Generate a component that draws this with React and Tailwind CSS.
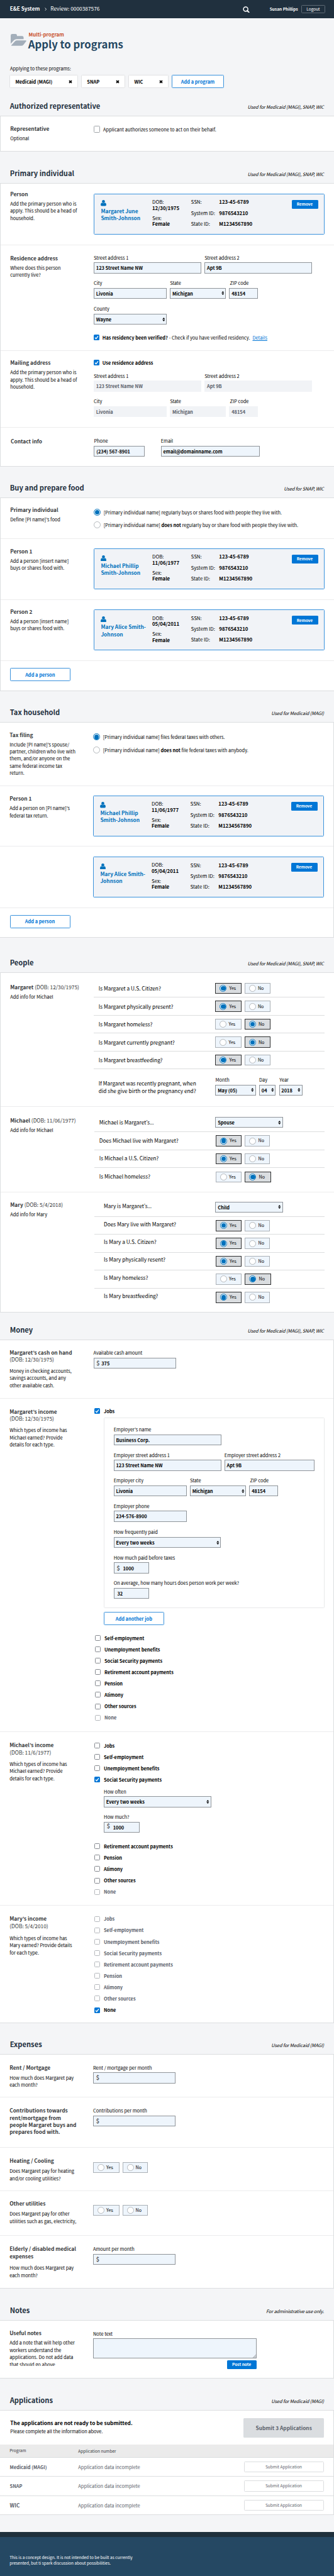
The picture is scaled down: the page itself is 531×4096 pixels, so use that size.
import React from 'react';

const FONT = "font-['Noto_Sans_CJK_JP','Noto_Sans',sans-serif]";

/* ---------- icons ---------- */

function Times() {
  return (
    <svg className="h-[6px] w-[6px]" viewBox="0 0 12 12">
      <path d="M2 2.2 L10 9.8 M10 2.2 L2 9.8" stroke="#000" strokeWidth="3.6" fill="none" />
    </svg>
  );
}

function Folder() {
  return (
    <svg className="h-[19px] w-[25px] shrink-0" viewBox="0 0 145 110" fill="#a3aeba">
      <path d="M0 90 V14 Q0 0 14 0 H44 Q58 0 58 14 V19 H104 Q119 19 119 34 V48 H54 Q40 48 30 58 Z" />
      <path d="M6 104 L40 67 Q48 59 58 59 H140 Q147 59 143 66 L119 98 Q110 109 97 109 H9 Q3 109 6 104 Z" />
    </svg>
  );
}

function Person() {
  return (
    <svg className="h-[9.5px] w-[9px]" viewBox="0 0 18 19" fill="#0071bc">
      <ellipse cx="9" cy="4.9" rx="4.7" ry="4.9" />
      <path d="M4.3 8.6 Q9 12.6 13.7 8.6 Q18 9.4 18 15.5 Q18 19 14.5 19 H3.5 Q0 19 0 15.5 Q0 9.4 4.3 8.6 Z" />
    </svg>
  );
}

function Search() {
  return (
    <svg className="h-[10.5px] w-[11px]" viewBox="0 0 22 21" fill="none" stroke="#fff">
      <circle cx="9.2" cy="8.8" r="7" strokeWidth="3" />
      <path d="M14.2 14 L19.6 19.2" strokeWidth="3.8" strokeLinecap="round" />
    </svg>
  );
}

function Sort() {
  return (
    <svg className="h-[6px] w-[4.6px] shrink-0" viewBox="0 0 9 12" fill="#000">
      <path d="M0.3 5 L4.5 0 L8.7 5 Z M0.3 7 L4.5 12 L8.7 7 Z" />
    </svg>
  );
}

/* ---------- controls ---------- */

function Check({ on, muted }) {
  if (on) {
    return (
      <span className="flex h-[9px] w-[9px] shrink-0 items-center justify-center rounded-[1.5px] bg-[#0076d6]">
        <svg className="h-[7px] w-[7px]" viewBox="0 0 14 14" fill="none" stroke="#fff" strokeWidth="2.6">
          <path d="M2 7.6 L5.4 11.4 L12 2.6" />
        </svg>
      </span>
    );
  }
  return (
    <span
      className={`h-[9px] w-[9px] shrink-0 rounded-[1.5px] border bg-white ${muted ? 'border-[#b5b8bc]' : 'border-[#85898f]'}`}
    />
  );
}

function CheckRow({ on, muted, children }) {
  return (
    <div className="flex h-[18.13px] items-center gap-[6px]">
      <Check on={on} muted={muted} />
      <span className={`font-bold ${muted ? 'text-[#5b616b]' : 'text-black'}`}>{children}</span>
    </div>
  );
}

function Radio({ on }) {
  if (on) {
    return (
      <span className="flex h-[11px] w-[11px] shrink-0 items-center justify-center rounded-full border border-[#0071bc] bg-white">
        <span className="h-[7.4px] w-[7.4px] rounded-full bg-[#0071bc]" />
      </span>
    );
  }
  return <span className="h-[11px] w-[11px] shrink-0 rounded-full border border-[#b4b8bc] bg-white" />;
}

function YesNo({ value, narrow }) {
  const on = 'border-[#2e2f30] bg-[#dadde0] gap-[4px]';
  const off = 'border-[#aab0b6] bg-[#eef5fc] gap-[3px]';
  return (
    <div className="flex gap-[5px] text-[7.2px]">
      <span className={`flex h-[17.5px] w-[41.5px] items-center border pl-[6px] ${value === 'yes' ? on : off}`}>
        <Radio on={value === 'yes'} />
        <span>Yes</span>
      </span>
      <span
        className={`flex h-[17.5px] items-center border pl-[6px] ${narrow ? 'w-[40px]' : 'w-[41.5px]'} ${value === 'no' ? on : off}`}
      >
        <Radio on={value === 'no'} />
        <span>No</span>
      </span>
    </div>
  );
}

function Input({ w, value, select, disabled, dollar, inset = 'pl-[2.8px]' }) {
  return (
    <div
      className={`flex h-[17.5px] items-center justify-between font-bold ${w} ${
        disabled ? 'bg-[#f1f3f6] pl-[3.8px] text-[#5b616b]' : `border border-[#8f9499] bg-[#eef5fc] text-black ${inset}`
      } ${select ? 'pr-[1.8px]' : ''}`}
    >
      <span className="flex items-center">
        {dollar && <span className={`pl-[1px] text-[9px] font-bold leading-[11px] text-[#5b5e62] ${dollar}`}>$</span>}
        <span>{value}</span>
      </span>
      {select && <Sort />}
    </div>
  );
}

function Field({ label, shift = '', ...rest }) {
  return (
    <div className="flex flex-col gap-[2.1px]">
      <span className={shift}>{label}</span>
      <Input {...rest} />
    </div>
  );
}

function OutlineButton({ w, children }) {
  return (
    <button
      className={`flex h-[21px] items-center justify-center rounded-[1.5px] border border-[#3a92dc] bg-white font-bold text-[#0076d6] ${w}`}
    >
      {children}
    </button>
  );
}

/* ---------- page structure ---------- */

function Head({ h, title, note }) {
  return (
    <div className={`flex items-end justify-between border-b border-[#dcdee0] bg-[#f4f5f7] pb-[7.5px] pl-[15.7px] pr-[16px] ${h}`}>
      <h2 className="mb-[1px] text-[11.16px] font-bold leading-[14px] text-[#1f303e]">{title}</h2>
      <span className="leading-[12px] tracking-[-0.1px] italic">{note}</span>
    </div>
  );
}

function Row({ h, left, right, title, dob, lines = [], gap = 'mt-[3.4px]', last, children }) {
  return (
    <div className={`flex border-b ${last ? 'border-[#dcdee0]' : 'border-[#ececed]'} ${h}`}>
      <div className={`w-[148px] shrink-0 pl-[15.2px] ${left}`}>
        {title && <h3 className="text-[8.33px] font-bold text-[#36383a]">{title}</h3>}
        {dob && <div className="text-[8.33px] text-[#36383a]">{dob}</div>}
        <div className={gap}>
          {lines.map((l) => (
            <div key={l}>{l}</div>
          ))}
        </div>
      </div>
      <div className={right}>{children}</div>
    </div>
  );
}

function PersonCard({ first, second, dob }) {
  return (
    <div className="flex h-[64.8px] w-[367px] justify-between rounded-[1.5px] border border-[#3a92dc] bg-[#f1f3f7] pr-[9.5px] text-[7.83px]">
      <div className="flex">
        <div className="w-[92px] pl-[10.4px] pt-[9.3px]">
          <Person />
          <div className="mt-[1.8px] text-[8.33px] font-bold text-[#0071bc]">
            <div>{first}</div>
            <div>{second}</div>
          </div>
        </div>
        <div className="w-[61.6px] pt-[7.1px] leading-[9.5px]">
          <div>DOB:</div>
          <div className="font-bold">{dob}</div>
          <div className="mt-[6.5px]">Sex:</div>
          <div className="font-bold">Female</div>
        </div>
        <div className="w-[44.7px] pt-[3.2px] leading-[17.25px]">
          <div>SSN:</div>
          <div>System ID:</div>
          <div>State ID:</div>
        </div>
        <div className="pt-[3.2px] font-bold leading-[17.25px]">
          <div>123-45-6789</div>
          <div>9876543210</div>
          <div>M1234567890</div>
        </div>
      </div>
      <button className="mt-[9px] flex h-[13.5px] w-[42px] items-center justify-center rounded-[1.5px] bg-[#0076d6] text-[6.4px] font-bold text-white">
        Remove
      </button>
    </div>
  );
}

function Question({ text, pad, nudge = '', h = 'h-[28.4px]', last, children }) {
  return (
    <div className={`flex w-[366.5px] items-center ${h} ${last ? '' : 'border-b border-[#dcddde]'}`}>
      <div className={`w-[193.4px] shrink-0 text-[8.33px] ${pad} ${nudge}`}>{text}</div>
      {children}
    </div>
  );
}

function RadioLine({ on, children }) {
  return (
    <div className="flex h-[20.4px] items-center gap-[4.8px]">
      <Radio on={on} />
      <span>{children}</span>
    </div>
  );
}

function AppRow({ h, name, big }) {
  return (
    <div className={`flex items-center border-b border-[#dcdee0] pl-[15.6px] pr-[15.5px] text-[#5b616b] ${h}`}>
      <span className={`w-[108.7px] font-bold ${big ? 'text-[8.33px]' : 'text-[7.42px]'}`}>{name}</span>
      <span className="flex-1 text-[7.5px]">Application data incomplete</span>
      <button className="flex h-[17.5px] w-[127px] items-center justify-center rounded-[1.5px] border border-[#dcdee0] bg-white text-[6.5px]">
        Submit Application
      </button>
    </div>
  );
}

const INCOME = [
  'Jobs',
  'Self-employment',
  'Unemployment benefits',
  'Social Security payments',
  'Retirement account payments',
  'Pension',
  'Alimony',
  'Other sources',
];

const ALL = 'Used for Medicaid (MAGI), SNAP, WIC';
const HOUSEHOLD = ['Add the primary person who is', 'apply. This should be a head of', 'household.'];

export default function App() {
  return (
    <div className={`h-[4096px] w-[531px] overflow-hidden whitespace-nowrap bg-[#f4f5f7] text-[7.42px] leading-[11.43px] text-black ${FONT}`}>
      <header className="flex h-[28.6px] items-center bg-[#20303e] pb-[1px] pl-[15.7px] pr-[14.2px] text-[8.2px] text-white">
        <span className="font-bold">E&amp;E System</span>
        <svg className="ml-[7.5px] mt-[1.4px] h-[5.4px] w-[3.4px]" viewBox="0 0 7 11" fill="none" stroke="#fff" strokeWidth="1.8">
          <path d="M1 1 L5.6 5.5 L1 10" />
        </svg>
        <span className="ml-[6px] flex-1 text-[8.33px]">Review: 0000387576</span>
        <span className="mr-[31.4px] mt-[2px]">
          <Search />
        </span>
        <span className="mr-[5.4px] mt-[1px] text-[6.5px] font-bold">Susan Phillips</span>
        <button className="mt-[1.5px] flex h-[13.4px] w-[37.8px] items-center justify-center rounded-[1.5px] border border-[#5f6b76] text-[6.5px]">
          Logout
        </button>
      </header>

      <div className="h-[112.4px]">
        <div className="flex pl-[16.6px] pt-[20px]">
          <div className="pt-[5.7px]">
            <Folder />
          </div>
          <div className="pl-[4px]">
            <div className="text-[7.86px] font-bold text-[#c8502c]">Multi-program</div>
            <h1 className="-ml-[0.8px] text-[16.7px] font-bold leading-[20px] text-[#254863]">Apply to programs</h1>
          </div>
        </div>
        <div className="pl-[16px] pt-[23.2px]">Applying to these programs:</div>
        <div className="flex gap-[5.3px] pl-[15.2px] pt-[4.8px] font-bold">
          <span className="flex h-[21px] w-[108.5px] items-center justify-between rounded-[1.5px] border border-[#e1e2e4] bg-white pl-[8.3px] pr-[8px]">
            Medicaid (MAGI) <Times />
          </span>
          <span className="flex h-[21px] w-[69.8px] items-center justify-between rounded-[1.5px] border border-[#e1e2e4] bg-white pl-[8.3px] pr-[8px]">
            SNAP <Times />
          </span>
          <span className="flex h-[21px] w-[63.8px] items-center justify-between rounded-[1.5px] border border-[#e1e2e4] bg-white pl-[8.3px] pr-[8px]">
            WIC <Times />
          </span>
          <OutlineButton w="w-[82.6px]">Add a program</OutlineButton>
        </div>
      </div>

      <Head h="h-[44px]" title="Authorized representative" note={ALL} />
      <section className="border-l border-[#dcdee0] bg-white">
        <Row h="h-[56px]" left="pt-[14px]" right="pt-[14.7px]" title="Representative" lines={['Optional']} last>
          <div className="flex items-center gap-[4.7px]">
            <span className="h-[10.4px] w-[10.4px] rounded-[1.5px] border border-[#a0a4a8] bg-white" />
            <span>Applicant authorizes someone to act on their behalf.</span>
          </div>
        </Row>
      </section>

      <Head h="h-[51px]" title="Primary individual" note={ALL} />
      <section className="border-l border-[#dcdee0] bg-white">
        <Row h="h-[98px]" left="pt-[11.1px]" right="pt-[16.2px]" title="Person" lines={HOUSEHOLD}>
          <PersonCard first="Margaret June" second="Smith-Johnson" dob="12/30/1975" />
        </Row>
        <Row
          h="h-[168px]"
          left="pt-[14.8px]"
          right="pt-[13.7px]"
          title="Residence address"
          lines={['Where does this person', 'currently live?']}
        >
          <div className="flex gap-[5px]">
            <Field label="Street address 1" w="w-[171.3px]" value="123 Street Name NW" />
            <Field label="Street address 2" w="w-[171px]" value="Apt 9B" />
          </div>
          <div className="mt-[9.5px] flex gap-[5.2px]">
            <Field label="City" w="w-[116px]" value="Livonia" />
            <Field label="State" w="w-[89px]" value="Michigan" select />
            <Field label="ZIP code" shift="pl-[1.2px]" w="w-[45.7px]" value="48154" />
          </div>
          <div className="mt-[10px] flex">
            <Field label="County" w="w-[116px]" value="Wayne" select />
          </div>
          <div className="mt-[11px] flex h-[18.13px] items-center">
            <Check on />
            <span className="ml-[4.8px] font-bold">Has residency been verified?</span>
            <span className="ml-[2px]">- Check if you have verified residency.</span>
            <a className="ml-[4px] text-[#0076d6] underline">Details</a>
          </div>
        </Row>
        <Row h="h-[122px]" left="pt-[12.9px]" right="pt-[9.9px]" title="Mailing address" lines={HOUSEHOLD} gap="mt-[3.8px]">
          <div className="flex h-[18.13px] items-center gap-[4.8px]">
            <Check on />
            <span className="font-bold">Use residence address</span>
          </div>
          <div className="mt-[5.9px] flex gap-[5px]">
            <Field label="Street address 1" w="w-[171.3px]" value="123 Street Name NW" disabled />
            <Field label="Street address 2" w="w-[171px]" value="Apt 9B" disabled />
          </div>
          <div className="mt-[9.5px] flex gap-[5.2px]">
            <Field label="City" w="w-[116px]" value="Livonia" disabled />
            <Field label="State" w="w-[89px]" value="Michigan" disabled />
            <Field label="ZIP code" shift="pl-[1.2px]" w="w-[45.7px]" value="48154" disabled />
          </div>
        </Row>
        <Row h="h-[62px]" left="pt-[16.4px] pl-[16px]" right="pt-[15.1px]" title="Contact info" last>
          <div className="flex gap-[26px] pl-[0.4px]">
            <Field label="Phone" w="w-[80.3px]" value="(234) 567-8901" />
            <Field label="Email" w="w-[157.4px]" value="email@domainname.com" />
          </div>
        </Row>
      </section>

      <Head h="h-[50px]" title="Buy and prepare food" note="Used for SNAP, WIC" />
      <section className="border-l border-[#dcdee0] bg-white">
        <Row h="h-[65px]" left="pt-[12.8px]" right="pt-[12.1px]" title="Primary individual" lines={['Define [PI name]’s food']}>
          <RadioLine on>[Primary individual name] regularly buys or shares food with people they live with.</RadioLine>
          <RadioLine>
            [Primary individual name] <b>does not</b> regularly buy or share food with people they live with.
          </RadioLine>
        </Row>
        <Row
          h="h-[97px]"
          left="pt-[14.2px]"
          right="pt-[15.3px]"
          title="Person 1"
          lines={['Add a person [insert name]', 'buys or shares food with.']}
        >
          <PersonCard first="Michael Phillip" second="Smith-Johnson" dob="11/06/1977" />
        </Row>
        <Row
          h="h-[97px]"
          left="pt-[13.2px]"
          right="pt-[15.5px]"
          title="Person 2"
          lines={['Add a person [insert name]', 'buys or shares food with.']}
        >
          <PersonCard first="Mary Alice Smith-" second="Johnson" dob="05/04/2011" />
        </Row>
        <div className="h-[48px] border-b border-[#dcdee0] pl-[14.8px] pt-[11px]">
          <OutlineButton w="w-[96px]">Add a person</OutlineButton>
        </div>
      </section>

      <Head h="h-[50px]" title="Tax household" note="Used for Medicaid (MAGI)" />
      <section className="border-r border-[#dcdee0] bg-white">
        <Row
          h="h-[101px]"
          left="pt-[13.7px]"
          right="pt-[12.8px]"
          title="Tax filing"
          lines={[
            'Include [PI name]’s spouse/',
            'partner, children who live with',
            'them, and/or anyone on the',
            'same federal income tax',
            'return.',
          ]}
        >
          <RadioLine on>[Primary individual name] files federal taxes with others.</RadioLine>
          <RadioLine>
            [Primary individual name] <b>does not</b> file federal taxes with anybody.
          </RadioLine>
        </Row>
        <Row
          h="h-[96px]"
          left="pt-[14.5px]"
          right="pt-[15.2px]"
          title="Person 1"
          lines={['Add a person on [PI name]’s', 'federal tax return.']}
        >
          <PersonCard first="Michael Phillip" second="Smith-Johnson" dob="11/06/1977" />
        </Row>
        <Row h="h-[98px]" left="" right="pt-[16.4px]">
          <PersonCard first="Mary Alice Smith-" second="Johnson" dob="05/04/2011" />
        </Row>
        <div className="h-[47px] border-b border-[#dcdee0] pl-[15.5px] pt-[10.6px]">
          <OutlineButton w="w-[96px]">Add a person</OutlineButton>
        </div>
      </section>

      <Head h="h-[56px]" title="People" note={ALL} />
      <section className="border-l border-[#dcdee0] bg-white">
        <Row
          h="h-[213px]"
          left="pt-[16.7px]"
          right="pt-[11px]"
          gap="mt-[4px]"
          title={<>Margaret <span className="font-normal">(DOB: 12/30/1975)</span></>}
          lines={['Add info for Michael']}
        >
          {[
            ['Is Margaret a U.S. Citizen?', 'yes'],
            ['Is Margaret physically present?', 'yes'],
            ['Is Margaret homeless?', 'no'],
            ['Is Margaret currently pregnant?', 'no'],
            ['Is Margaret breastfeeding?', 'yes'],
          ].map(([text, value]) => (
            <Question key={text} text={text} pad="pl-[7.8px]" h="h-[28.5px]">
              <YesNo value={value} />
            </Question>
          ))}
          <div className="flex pt-[10.7px]">
            <div className="w-[193.4px] pl-[7.8px] pt-[5px] text-[8.33px] leading-[12px]">
              <div>If Margaret was recently pregnant, when</div>
              <div>did she give birth or the pregnancy end?</div>
            </div>
            <div className="flex gap-[5.2px]">
              <Field label="Month" w="w-[64.4px]" value="May (05)" select />
              <Field label="Day" w="w-[26.4px]" value="04" select />
              <Field label="Year" shift="pl-[0.8px]" w="w-[37.3px]" value="2018" select />
            </div>
          </div>
        </Row>
        <Row
          h="h-[136px]"
          left="pt-[15.9px]"
          right="pt-[12px] pl-[0.6px]"
          gap="mt-[4px]"
          title={<>Michael <span className="font-normal">(DOB: 11/06/1977)</span></>}
          lines={['Add info for Michael']}
        >
          <Question text={<>Michael is Margaret’s<span className="font-['Noto_Sans']">…</span></>} pad="pl-[8.2px]" nudge="mb-[1.6px]">
            <div className="-ml-[0.6px] mb-[2px]">
              <Input w="w-[107.3px]" value="Spouse" select />
            </div>
          </Question>
          <Question text="Does Michael live with Margaret?" pad="pl-[8.2px]" nudge="mb-[1.6px]">
            <YesNo value="yes" narrow />
          </Question>
          <Question text="Is Michael a U.S. Citizen?" pad="pl-[8.2px]" nudge="mb-[1.6px]">
            <YesNo value="yes" narrow />
          </Question>
          <Question text="Is Michael homeless?" pad="pl-[8.2px]" nudge="mb-[1.6px]" last>
            <YesNo value="no" />
          </Question>
        </Row>
        <Row
          h="h-[191px]"
          left="pt-[14.3px]"
          right="pt-[10.7px] pl-[0.6px]"
          title={<>Mary <span className="font-normal">(DOB: 5/4/2018)</span></>}
          lines={['Add info for Mary']}
          last
        >
          <Question text={<>Mary is Margaret’s<span className="font-['Noto_Sans']">…</span></>} pad="pl-[15.4px]" nudge="mb-[5px]">
            <div className="-ml-[0.6px] mb-[2px]">
              <Input w="w-[107.3px]" value="Child" select />
            </div>
          </Question>
          {[
            ['Does Mary live with Margaret?', 'yes'],
            ['Is Mary a U.S. Citizen?', 'yes'],
            ['Is Mary physically resent?', 'yes'],
            ['Is Mary homeless?', 'no'],
            ['Is Mary breastfeeding?', 'yes'],
          ].map(([text, value], i) => (
            <Question key={text} text={text} pad="pl-[15.4px]" nudge="mb-[5px]" last={i === 4}>
              <YesNo value={value} narrow={value === 'yes'} />
            </Question>
          ))}
        </Row>
      </section>

      <Head h="h-[44px]" title="Money" note={ALL} />
      <section className="border-r border-[#dcdee0] bg-white">
        <Row
          h="h-[93px]"
          left="pt-[13.7px]"
          right="pt-[14px]"
          gap="mt-[6.4px]"
          title="Margaret’s cash on hand"
          dob="(DOB: 12/30/1975)"
          lines={['Money in checking accounts,', 'savings accounts, and any', 'other available cash.']}
        >
          <div className="flex pl-[0.5px]">
            <Field label="Available cash amount" w="w-[131.5px]" value="375" dollar="pr-[2.6px]" />
          </div>
        </Row>
        <Row
          h="h-[530px]"
          left="pt-[15px]"
          right="pt-[10.9px]"
          gap="mt-[6.4px]"
          title="Margaret’s income"
          dob="(DOB: 12/30/1975)"
          lines={['Which types of income has', 'Michael earned? Provide', 'details for each type.']}
        >
          <div className="pl-[2px]">
            <CheckRow on>Jobs</CheckRow>
          </div>
          <div className="ml-[16.8px] mt-[1px] flex h-[303.4px] w-[351px] flex-col rounded-[1.5px] border border-[#e8e9ea] pl-[14.9px] pt-[12.3px]">
            <div className="flex">
              <Field label="Employer’s name" w="w-[171px]" value="Business Corp." />
            </div>
            <div className="mt-[9.5px] flex gap-[5.1px]">
              <Field label="Employer street address 1" w="w-[171px]" value="123 Street Name NW" />
              <Field label="Employer street address 2" w="w-[143px]" value="Apt 9B" />
            </div>
            <div className="mt-[9.5px] flex gap-[5.1px]">
              <Field label="Employer city" w="w-[116.2px]" value="Livonia" />
              <Field label="State" w="w-[89.4px]" value="Michigan" select />
              <Field label="ZIP code" shift="pl-[1px]" w="w-[45.7px]" value="48154" />
            </div>
            <div className="mt-[9.5px] flex">
              <Field label="Employer phone" w="w-[116.2px]" value="234-576-8900" />
            </div>
            <div className="mt-[10.5px] flex">
              <Field label="How frequently paid" w="w-[170.7px]" value="Every two weeks" select />
            </div>
            <div className="mt-[9.5px] flex">
              <Field label="How much paid before taxes" w="w-[56.5px]" value="1000" dollar="pr-[4.6px]" />
            </div>
            <div className="mt-[9px] flex">
              <Field
                label="On average, how many hours does person work per week?"
                w="w-[56.5px]"
                inset="pl-[4.8px]"
                value="32"
              />
            </div>
          </div>
          <div className="ml-[16.8px] mt-[5.5px]">
            <OutlineButton w="w-[96px]">Add another job</OutlineButton>
          </div>
          <div className="pl-[3px] pt-[11.3px]">
            {INCOME.slice(1).map((t) => (
              <CheckRow key={t}>{t}</CheckRow>
            ))}
            <CheckRow muted>None</CheckRow>
          </div>
        </Row>
        <Row
          h="h-[276px]"
          left="pt-[15.5px]"
          right="pt-[12.4px] pl-[2px]"
          gap="mt-[6.4px]"
          title="Michael’s income"
          dob="(DOB: 11/6/1977)"
          lines={['Which types of income has', 'Michael earned? Provide', 'details for each type.']}
        >
          {INCOME.slice(0, 4).map((t, i) => (
            <CheckRow key={t} on={i === 3}>
              {t}
            </CheckRow>
          ))}
          <div className="flex pl-[15px] pt-[3.8px]">
            <Field label="How often" w="w-[170.7px]" value="Every two weeks" select />
          </div>
          <div className="mb-[12.4px] flex pl-[15px] pt-[9.5px]">
            <Field label="How much?" w="w-[56.5px]" value="1000" dollar="pr-[4.6px] -mt-[3px]" />
          </div>
          {INCOME.slice(4).map((t) => (
            <CheckRow key={t}>{t}</CheckRow>
          ))}
          <CheckRow muted>None</CheckRow>
        </Row>
        <Row
          h="h-[187px]"
          left="pt-[15.3px]"
          right="pt-[12px] pl-[2px]"
          gap="mt-[7.9px]"
          title="Mary’s income"
          dob="(DOB: 5/4/2010)"
          lines={['Which types of income has', 'Mary earned? Provide details', 'for each type.']}
          last
        >
          {INCOME.map((t) => (
            <CheckRow key={t} muted>
              {t}
            </CheckRow>
          ))}
          <CheckRow on>None</CheckRow>
        </Row>
      </section>

      <Head h="h-[50px]" title="Expenses" note="Used for Medicaid (MAGI)" />
      <section className="border-r border-[#dcdee0] bg-white">
        <Row
          h="h-[68px]"
          left="pt-[14.8px]"
          right="pt-[14.7px]"
          gap="mt-[4.8px]"
          title="Rent / Mortgage"
          lines={['How much does Margaret pay', 'each month?']}
        >
          <div className="flex">
            <Field label="Rent / mortgage per month" w="w-[131.3px]" dollar="pr-[4px]" />
          </div>
        </Row>
        <Row
          h="h-[80px]"
          left="pt-[15.2px]"
          right="pt-[15.3px]"
          title={
            <>
              Contributions towards
              <br />
              rent/mortgage from
              <br />
              people Margaret buys and
              <br />
              prepares food with.
            </>
          }
        >
          <div className="flex">
            <Field label="Contributions per month" w="w-[131.3px]" dollar="pr-[4px]" />
          </div>
        </Row>
        <Row
          h="h-[69px]"
          left="pt-[15.2px]"
          right="pt-[23px]"
          gap="mt-[4.8px]"
          title="Heating / Cooling"
          lines={['Does Margaret pay for heating', 'and/or cooling utilities?']}
        >
          <YesNo narrow />
        </Row>
        <Row
          h="h-[71px]"
          left="pt-[14.1px]"
          right="pt-[22px]"
          gap="mt-[4.8px]"
          title="Other utilities"
          lines={['Does Margaret pay for other', 'utilities such as gas, electricity,']}
        >
          <YesNo narrow />
        </Row>
        <Row
          h="h-[84px]"
          left="pt-[15.3px]"
          right="pt-[15.2px]"
          gap="mt-[7px]"
          title={
            <>
              Elderly / disabled medical
              <br />
              expenses
            </>
          }
          lines={['How much does Margaret pay', 'each month?']}
          last
        >
          <div className="flex">
            <Field label="Amount per month" w="w-[131.3px]" dollar="pr-[4px]" />
          </div>
        </Row>
      </section>

      <Head h="h-[51px]" title="Notes" note="For administrative use only." />
      <section className="border-r border-[#dcdee0] bg-white">
        <div className="flex h-[92px] border-b border-[#dcdee0]">
          <div className="w-[148px] shrink-0 pl-[15.2px] pt-[14.2px]">
            <h3 className="text-[8.33px] font-bold text-[#36383a]">Useful notes</h3>
            <div className="mt-[3.6px] h-[42.8px] overflow-hidden">
              <div>Add a note that will help other</div>
              <div>workers understand the</div>
              <div>applications. Do not add data</div>
              <div>that should go above.</div>
            </div>
          </div>
          <div className="w-[259.5px] pt-[15px]">
            <div>Note text</div>
            <div className="mt-[1.8px] flex h-[31.4px] items-end justify-end border border-[#8f9499] bg-[#eef5fc]">
              <svg className="h-[5px] w-[5px]" viewBox="0 0 10 10" stroke="#8a8d91" strokeWidth="1.4">
                <path d="M0 10 L10 0 M3.3 10 L10 3.3 M6.6 10 L10 6.6" />
              </svg>
            </div>
            <button className="ml-auto mt-[3.6px] flex h-[13.6px] w-[46.7px] items-center justify-center rounded-[1.5px] bg-[#0076d6] text-[6.54px] font-bold text-white">
              Post note
            </button>
          </div>
        </div>
      </section>

      <Head h="h-[51px]" title="Applications" note="Used for Medicaid (MAGI)" />
      <section className="border-r border-[#dcdee0] bg-white">
        <div className="flex h-[54px] justify-between pl-[16.3px] pr-[15px] pt-[12px]">
          <div className="pt-[2px]">
            <div className="text-[8.39px] font-bold">The applications are not ready to be submitted.</div>
            <div className="mt-[2px]">Please complete all the information above.</div>
          </div>
          <button className="flex h-[31px] w-[127.7px] items-center justify-center rounded-[1.5px] bg-[#dadde0] text-[8.31px] font-bold text-[#5b616b]">
            Submit 3 Applications
          </button>
        </div>
        <div className="flex h-[21px] items-center border-b border-[#dcdee0] bg-[#ebebeb] pl-[15.2px] text-[6.53px] text-[#36383c]">
          <span className="w-[109.1px]">Program</span>
          <span className="mt-[0.5px]">Application number</span>
        </div>
        <AppRow h="h-[30px]" name="Medicaid (MAGI)" />
        <AppRow h="h-[31px]" name="SNAP" />
        <AppRow h="h-[30px]" name="WIC" big />
      </section>

      <div className="h-[27px]" />
      <footer className="h-[70px] border-t-8 border-[#1f303c] bg-[#254863] pl-[15.2px] pt-[27.8px] text-[6.52px] leading-[9.2px] text-white">
        <div>This is a concept design. It is not intended to be built as currently</div>
        <div>presented, but ti spark discussion about possibilities.</div>
      </footer>
    </div>
  );
}
